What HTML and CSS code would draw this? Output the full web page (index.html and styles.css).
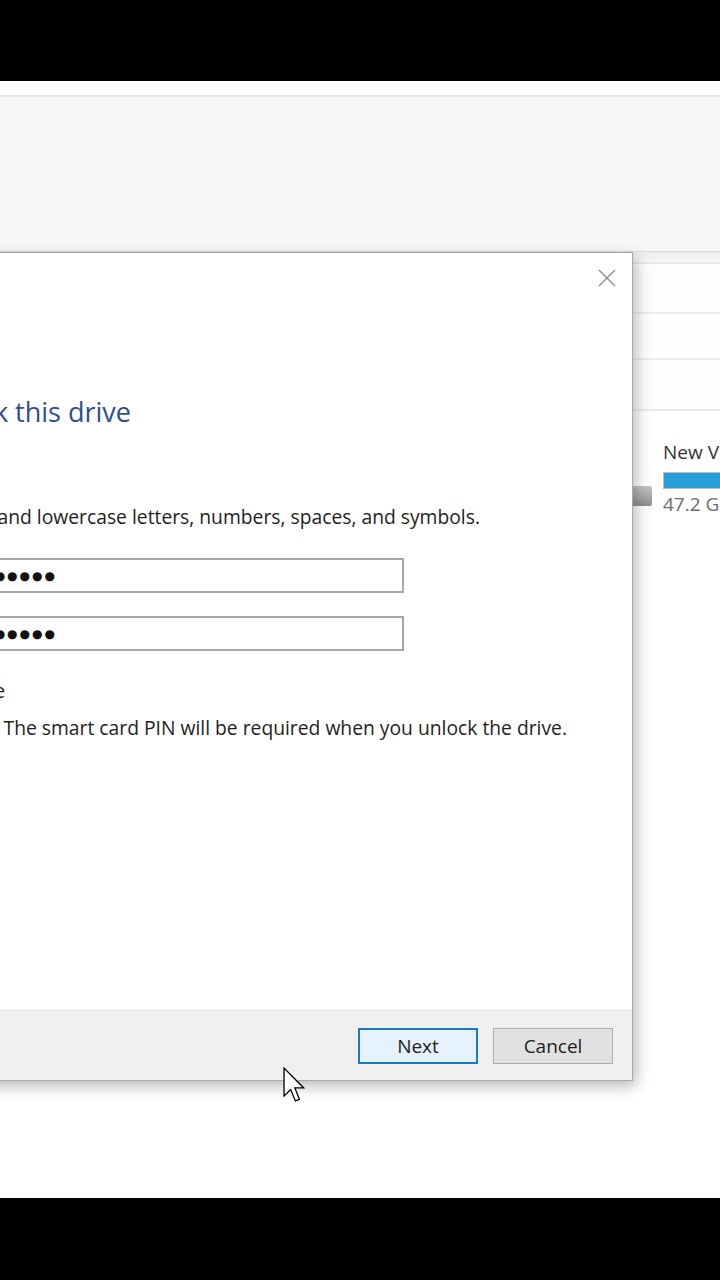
FILE: index.html
```html
<!DOCTYPE html>
<html lang="en">
<head>
<meta charset="utf-8">
<title>BitLocker Drive Encryption</title>
<link rel="stylesheet" href="styles.css">
</head>
<body>
<div class="screen">
  <div class="letterbox"></div>
  <div class="desktop">
    <div class="ribbon-top"></div>
    <div class="ribbon"></div>
    <div class="rows">
      <div class="band"></div>
      <div class="row"></div>
      <div class="row r2"></div>
      <div class="row r3"></div>
      <div class="drive">
        <div class="drive-icon"></div>
        <div class="drive-info">
          <div class="drive-name">New Volume (E:)</div>
          <div class="drive-bar"><div class="drive-fill"></div></div>
          <div class="drive-size">47.2 GB free of 48.8 GB</div>
        </div>
      </div>
    </div>

    <div class="dialog">
      <div class="dlg-head">
        <svg class="close" width="18" height="18" viewBox="0 0 18 18"><path d="M1 1 L17 17 M17 1 L1 17" stroke="#8c8c8c" stroke-width="1.4" fill="none"/></svg>
      </div>
      <div class="dlg-body">
        <div class="line title"><span>Choose how you want to unlock this drive</span></div>
        <div class="line hint"><span>Passwords should contain uppercase and lowercase letters, numbers, spaces, and symbols.</span></div>
        <div class="field f1"><span class="dots">●●●●●●●●●●</span></div>
        <div class="field f2"><span class="dots">●●●●●●●●●●</span></div>
        <div class="line check"><span>Use my smart card to unlock the drive</span></div>
        <div class="line smart"><span>You'll need to insert your smart card. The smart card PIN will be required when you unlock the drive.</span></div>
      </div>
      <div class="dlg-foot">
        <button class="btn primary">Next</button>
        <button class="btn">Cancel</button>
      </div>
    </div>

    <svg class="cursor" width="22" height="36" viewBox="0 0 12.6 20.6"><path d="M0.6 0.6 L0.6 16.6 L4.4 12.9 L7.1 19.4 L9.4 18.5 L6.8 12.0 L11.9 12.0 Z" fill="#fff" stroke="#000" stroke-width="0.75" stroke-linejoin="miter"/></svg>
  </div>
  <div class="letterbox bottom"></div>
</div>
</body>
</html>
```

FILE: styles.css
```css
* { box-sizing: border-box; }
html, body { margin: 0; padding: 0; }
body {
  width: 720px;
  height: 1280px;
  overflow: hidden;
  background: #000;
  font-family: "Open Sans", "Noto Sans", "Liberation Sans", sans-serif;
}
.screen { display: flex; flex-direction: column; height: 1280px; }
.letterbox { height: 81px; background: #000; flex: none; }
.letterbox.bottom { height: 82px; }
.desktop {
  position: relative;
  height: 1117px;
  background: #fff;
  overflow: hidden;
}
.ribbon-top { height: 16px; background: #fff; border-bottom: 2px solid #e6e7e7; }
.ribbon { height: 155px; background: #f6f7f7; border-bottom: 1px solid #d9d9d9; }
.band { height: 12px; background: linear-gradient(#ececec, #f7f7f7); border-bottom: 2px solid #e8e8e8; }
.row { height: 50px; border-bottom: 2px solid #ececec; background: #fdfdfd; }
.row.r2 { height: 46px; }
.row.r3 { height: 51px; }
.drive {
  display: flex;
  align-items: flex-start;
  padding-left: 632px;
  padding-top: 29px;
}
.drive-icon {
  width: 20px;
  height: 20px;
  margin-top: 46px;
  margin-right: 11px;
  background: linear-gradient(#c4c4c4, #8e8e8e);
  border-radius: 2px;
  flex: none;
}
.drive-info { white-space: nowrap; }
.drive-name { font-size: 19px; line-height: 24px; color: #333; }
.drive-bar {
  margin-top: 8px;
  width: 230px;
  height: 17px;
  background: #e6e6e6;
  border: 1px solid #bcbcbc;
}
.drive-fill { width: 100%; height: 100%; background: #26a0da; }
.drive-size { font-size: 19px; line-height: 24px; color: #6d6d6d; margin-top: 3px; }

/* dialog window */
.dialog {
  position: absolute;
  left: -367px;
  top: 171px;
  width: 1000px;
  height: 829px;
  background: #fff;
  border: 1px solid #a9a9a9;
  box-shadow: 3px 5px 14px rgba(0,0,0,0.28);
  display: flex;
  flex-direction: column;
}
.dlg-head {
  height: 50px;
  display: flex;
  justify-content: flex-end;
  align-items: flex-start;
  padding: 16px 16px 0 0;
  flex: none;
}
.dlg-body { flex: 1; display: flex; flex-direction: column; }
.line {
  display: flex;
  justify-content: flex-end;
  white-space: nowrap;
  overflow: visible;
  font-size: 19.3px;
  line-height: 24px;
  color: #1e1e1e;
}
.title {
  margin-top: 91px;
  margin-right: 501px;
  font-size: 27px;
  line-height: 36px;
  color: #2f4e8c;
}
.hint { margin-top: 75px; margin-right: 152px; }
.field {
  display: flex;
  justify-content: flex-end;
  align-items: center;
  height: 35px;
  margin-right: 228px;
  border: 2px solid #a7a7a7;
  padding-right: 347px;
  white-space: nowrap;
}
.f1 { margin-top: 29px; }
.f2 { margin-top: 23px; }
.dots {
  font-family: "DejaVu Sans", sans-serif;
  font-size: 12px;
  letter-spacing: 2px;
  color: #111;
  line-height: 1;
  margin-right: -2px;
}
.check { margin-top: 28px; margin-right: 627px; }
.smart { margin-top: 13px; margin-right: 65px; }

.dlg-foot {
  height: 70px;
  flex: none;
  background: #f0f0f0;
  border-top: 1px solid #e4e4e4;
  display: flex;
  justify-content: flex-end;
  align-items: flex-start;
  gap: 15px;
  padding: 17px 19px 0 0;
}
.btn {
  width: 120px;
  height: 36px;
  font-family: inherit;
  font-size: 19px;
  color: #1e1e1e;
  background: #e1e1e1;
  border: 1px solid #adadad;
  border-radius: 0;
  padding: 0;
  margin: 0;
}
.btn.primary {
  background: #e5f1fb;
  border: 2px solid #1979ca;
}
.cursor {
  position: absolute;
  left: 283px;
  top: 986px;
}
```
